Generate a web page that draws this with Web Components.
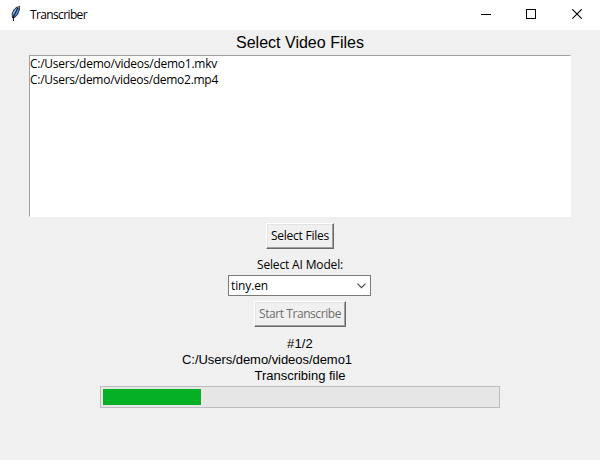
<!DOCTYPE html>
<html lang="en">
<head>
<meta charset="utf-8">
<title>Transcriber</title>
<style>
html,body{margin:0;height:100%;overflow:hidden}
body{font-family:"Open Sans","Noto Sans",sans-serif;font-size:12px;color:#000;background:#f0f0f0}
</style>
</head>
<body>
<transcriber-window></transcriber-window>
<script>
const define = (name, html, ready) => customElements.define(name, class extends HTMLElement {
  constructor() {
    super();
    this.attachShadow({mode: "open"});
    const t = document.createElement("template");
    t.innerHTML = html;
    this.shadowRoot.append(t.content.cloneNode(true));
  }
  connectedCallback() { if (ready) ready(this); }
});

// One line of text, spaced to fill the width given by "w".
define("fit-text", `<style>
:host{display:block;white-space:nowrap;line-height:16px;height:16px}
span{display:inline-block}
</style><span></span>`, el => {
  const span = el.shadowRoot.querySelector("span");
  const text = el.getAttribute("text"), w = parseFloat(el.getAttribute("w"));
  el.style.width = w + "px";
  span.textContent = text;
  const natural = span.getBoundingClientRect().width;
  span.style.letterSpacing = ((w - natural) / text.length) + "px";
});

define("feather-icon", `<style>:host{display:block;width:16px;height:18px}svg{display:block}</style>
<svg width="16" height="18" viewBox="0 0 16 18">
<path d="M4 13 3.6 9 5.2 5 8.3 2 12 .8 11.8 5 10 9.5 6.6 13Z" fill="#26303c"/>
<path d="M4.6 11.5 4.6 8.5 6.4 5 9 2.5 7.8 6.2 5.6 9.5Z" fill="#7fb2ea"/>
<path d="M6.2 12 8 7.5 10.6 3 10.7 5.6 9 9.4Z" fill="#4a8ad2"/>
<path d="M9 1.9 11.4 1.3 11 3.4Z" fill="#8a939d"/>
<path d="M9.6 3.2 6.8 8.4 5.5 12.5" fill="none" stroke="#1d3858" stroke-width=".6"/>
<path d="M5.4 12V16" stroke="#000" stroke-width="1"/>
</svg>`);

define("title-bar", `<style>
:host{display:flex;height:30px;background:#fff;box-sizing:border-box;padding-left:8px}
feather-icon{margin-top:5px}
.name{margin:7px auto 0 6px}
.ctl{width:45px;display:flex;justify-content:center;padding-top:9px}
.ctl:last-child{width:46px}
svg{display:block;shape-rendering:crispEdges}
</style>
<feather-icon></feather-icon><div class="name"><slot></slot></div>
<div class="ctl"><svg width="11" height="11"><path d="M0 5.5H10" stroke="#000"/></svg></div>
<div class="ctl"><svg width="11" height="11"><path d="M.5.5H9.5V9.5H.5Z" fill="none" stroke="#000"/></svg></div>
<div class="ctl"><svg width="11" height="11" style="shape-rendering:auto"><path d="M.3.3 9.7 9.7M9.7.3.3 9.7" stroke="#000" stroke-width="1.15"/></svg></div>`);

define("list-box", `<style>
:host{display:block;box-sizing:border-box;width:542px;height:162px;background:#fff;border:1px solid #fff;border-top-color:#a0a0a0;border-left-color:#a0a0a0;padding:0}
</style><slot></slot>`);

define("push-button", `<style>
:host{display:flex;justify-content:center;box-sizing:border-box;height:26px;background:#f0f0f0;border:1px solid;border-color:#fff #696969 #696969 #fff;box-shadow:inset -1px -1px #a0a0a0,inset 1px 1px #e3e3e3;padding-top:4px}
:host([disabled]){color:#6d6d6d}
</style><slot></slot>`);

define("combo-box", `<style>
:host{display:flex;justify-content:space-between;box-sizing:border-box;width:143px;height:21px;background:#fff;border:1px solid #7a7a7a;padding:2px 4px 0 2px}
svg{display:block;margin-top:5px}
</style><slot></slot><svg width="9" height="6"><path d="M.5.6 4.5 4.6 8.5.6" fill="none" stroke="#444" stroke-width="1.1"/></svg>`);

define("progress-bar", `<style>
:host{display:block;box-sizing:border-box;width:400px;height:22px;background:#e6e6e6;border:1px solid #bcbcbc;padding:2px}
div{height:16px;width:98px;background:#06b025}
</style><div></div>`);

define("transcriber-window", `<style>
:host{display:block;width:600px;height:460px;background:#f0f0f0}
main{display:flex;flex-direction:column;align-items:center}
.heading{font:16px/16px "Liberation Sans",Arial,sans-serif;margin-top:5px}
list-box{margin-top:4px}
.select{width:68px;margin-top:6px}
.label{margin:8px 0 2px}
combo-box{margin-right:1px}
.start{width:92px;margin-top:5px}
.status{font-family:"Liberation Sans",Arial,sans-serif;font-size:13px;display:grid;justify-items:center;width:236px;margin-top:9px}
.path{justify-self:start}
progress-bar{margin-top:2px}
</style>
<title-bar><fit-text text="Transcriber" w="57"></fit-text></title-bar>
<main>
<fit-text class="heading" text="Select Video Files" w="128"></fit-text>
<list-box><fit-text text="C:/Users/demo/videos/demo1.mkv" w="187"></fit-text><fit-text text="C:/Users/demo/videos/demo2.mp4" w="188"></fit-text></list-box>
<push-button class="select"><fit-text text="Select Files" w="58"></fit-text></push-button>
<fit-text class="label" text="Select AI Model:" w="86"></fit-text>
<combo-box><fit-text text="tiny.en" w="37"></fit-text></combo-box>
<push-button class="start" disabled><fit-text text="Start Transcribe" w="82"></fit-text></push-button>
<div class="status">
<fit-text text="#1/2" w="26"></fit-text>
<fit-text class="path" text="C:/Users/demo/videos/demo1" w="170"></fit-text>
<fit-text text="Transcribing file" w="91"></fit-text>
</div>
<progress-bar></progress-bar>
</main>`);
</script>
</body>
</html>
